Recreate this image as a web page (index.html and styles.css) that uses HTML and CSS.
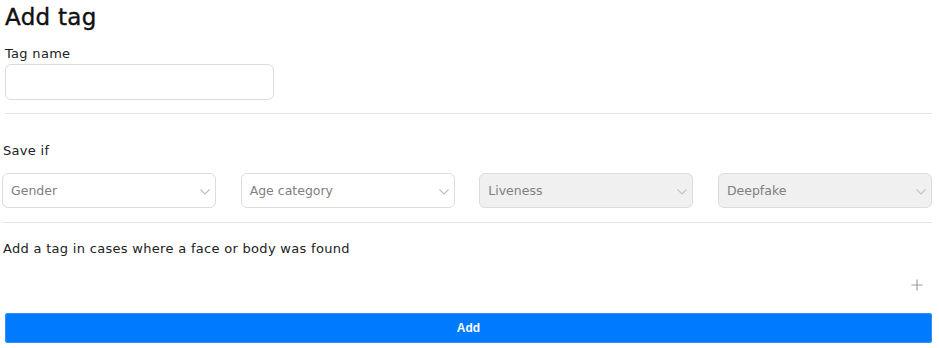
FILE: index.html
```html
<!DOCTYPE html>
<html lang="en">
<head>
<meta charset="utf-8">
<title>Add tag</title>
<link rel="stylesheet" href="styles.css">
</head>
<body>
<div class="page">
  <div class="head">
    <h1 class="title">Add tag</h1>
    <label class="label" for="tagname">Tag name</label>
    <input class="text-input" id="tagname" type="text">
  </div>
  <hr class="divider first">
  <div class="section-label">Save if</div>
  <div class="selects">
    <div class="select">
      <span class="select-text">Gender</span>
      <svg class="chev" width="10" height="6" viewBox="0 0 10 6"><path d="M0.5 0.5 L5 5 L9.5 0.5" fill="none" stroke="#bdbdbd" stroke-width="1.1"/></svg>
    </div>
    <div class="select">
      <span class="select-text">Age category</span>
      <svg class="chev" width="10" height="6" viewBox="0 0 10 6"><path d="M0.5 0.5 L5 5 L9.5 0.5" fill="none" stroke="#bdbdbd" stroke-width="1.1"/></svg>
    </div>
    <div class="select disabled">
      <span class="select-text">Liveness</span>
      <svg class="chev" width="10" height="6" viewBox="0 0 10 6"><path d="M0.5 0.5 L5 5 L9.5 0.5" fill="none" stroke="#c4c4c4" stroke-width="1.1"/></svg>
    </div>
    <div class="select disabled">
      <span class="select-text">Deepfake</span>
      <svg class="chev" width="10" height="6" viewBox="0 0 10 6"><path d="M0.5 0.5 L5 5 L9.5 0.5" fill="none" stroke="#c4c4c4" stroke-width="1.1"/></svg>
    </div>
  </div>
  <hr class="divider second">
  <div class="section-label cases">Add a tag in cases where a face or body was found</div>
  <div class="plus-row">
    <svg class="plus" width="12" height="12" viewBox="0 0 12 12"><path d="M6 0.5 V11.5 M0.5 6 H11.5" stroke="#a0a0a0" stroke-width="1.2" fill="none"/></svg>
  </div>
  <div class="btn-row">
    <button class="btn" type="button">Add</button>
  </div>
</div>
</body>
</html>
```
FILE: styles.css
```css
html, body {
  margin: 0;
  padding: 0;
  background: #fff;
}
body {
  font-family: "DejaVu Sans", "Open Sans", sans-serif;
  color: #222;
}
.page {
  padding: 0 7px 0 2px;
}
.head {
  padding-left: 3px;
  display: flex;
  flex-direction: column;
  align-items: flex-start;
}
.title {
  margin: 0;
  padding-top: 2px;
  font-size: 23px;
  line-height: 30px;
  font-weight: 500;
  color: #111;
  letter-spacing: 0.3px;
  -webkit-text-stroke: 0.4px #111;
}
.label {
  margin-top: 13px;
  font-size: 13px;
  line-height: 18px;
  letter-spacing: 0.3px;
  color: #222;
}
.text-input {
  box-sizing: border-box;
  margin: 1px 0 0 0;
  width: 269px;
  height: 36px;
  border: 1px solid #dcdcdc;
  border-radius: 6px;
  background: #fff;
  outline: none;
}
.divider {
  border: 0;
  border-top: 1px solid #e6e6e6;
  margin: 0;
}
.divider.first {
  margin: 13px 0 0 3px;
}
.section-label {
  font-size: 13px;
  line-height: 18px;
  letter-spacing: 0.3px;
  padding-left: 1px;
  color: #222;
}
.divider.first + .section-label {
  margin-top: 28px;
}
.selects {
  margin-top: 13px;
  display: grid;
  grid-template-columns: repeat(4, 1fr);
  column-gap: 24.5px;
}
.select {
  box-sizing: border-box;
  height: 35px;
  border: 1px solid #dcdcdc;
  border-radius: 6px;
  background: #fff;
  display: flex;
  align-items: center;
  justify-content: space-between;
  padding: 0 5px 0 8px;
}
.select.disabled {
  background: #f0f0f0;
}
.select-text {
  font-size: 12.5px;
  color: #808080;
}
.chev {
  display: block;
  margin-top: 2px;
}
.divider.second {
  margin-top: 14px;
}
.section-label.cases {
  margin-top: 17px;
}
.plus-row {
  display: flex;
  justify-content: flex-end;
  padding-right: 9px;
  margin-top: 21px;
}
.plus {
  display: block;
}
.btn-row {
  margin-top: 22px;
  padding-left: 3px;
}
.btn {
  display: block;
  width: 100%;
  height: 30px;
  border: 0;
  border-radius: 3px;
  background: #007bff;
  box-shadow: inset 0 0 0 1px #2f8fff;
  color: #fff;
  font-family: "Liberation Sans", Arial, sans-serif;
  font-weight: bold;
  font-size: 12px;
  cursor: pointer;
}
```
